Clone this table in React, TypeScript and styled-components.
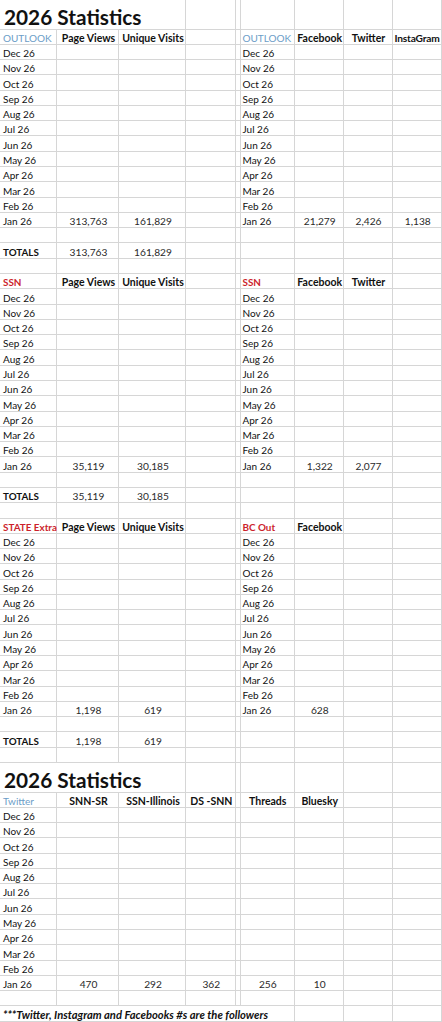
import React from "react";
import styled, { createGlobalStyle, css } from "styled-components";

const GlobalStyle = createGlobalStyle`
  html, body { margin: 0; padding: 0; background: #ffffff; overflow: hidden; }
  body { font-family: Lato, "Open Sans", sans-serif; }
`;

const ROW = "15.29px";
const TITLE = "29.5px";

const Sheet = styled.div`
  display: grid;
  width: 442px;
  grid-template-columns: 57px 62px 67px 49.5px 4px 55.5px 48.5px 49px 49.5px;
  grid-template-rows: ${TITLE} repeat(48, ${ROW}) ${TITLE} repeat(15, ${ROW});
  font-family: Lato, "Open Sans", sans-serif;
  font-size: 10px;
  color: #111111;
`;

type Tone = "plain" | "blue" | "red" | "head" | "tight" | "num" | "bold" | "title" | "note";

const toneStyles: Record<Tone, ReturnType<typeof css>> = {
  plain: css`font-weight: 400;`,
  blue: css`font-weight: 400; color: #6b9dc7; font-size: 10px;`,
  red: css`font-weight: 700; color: #cc1f2c; font-size: 9.9px;`,
  head: css`font-weight: 700; font-size: 10.5px;`,
  tight: css`font-weight: 700; font-size: 10.2px; letter-spacing: -0.2px; padding-left: 2px;`,
  num: css`font-weight: 400; color: #2a2a2a; font-size: 10.2px;`,
  bold: css`font-weight: 700; font-size: 9.8px;`,
  title: css`font-weight: 700; font-size: 20.8px; line-height: 24px; padding-left: 4px;`,
  note: css`font-weight: 700; font-style: italic; font-size: 11.2px;`,
};

const Cell = styled.div<{ $tone: Tone; $center: boolean; $span: number }>`
  box-sizing: border-box;
  grid-column: span ${(p) => p.$span};
  border-right: 1px solid #d6d6d6;
  border-bottom: 1px solid #d6d6d6;
  display: flex;
  align-items: flex-end;
  justify-content: ${(p) => (p.$center ? "center" : "flex-start")};
  padding: 0 1px 0 3px;
  line-height: 12px;
  white-space: nowrap;
  overflow: visible;
  ${(p) => toneStyles[p.$tone]}
`;

type C = { t?: string; tone?: Tone; c?: boolean; span?: number };

const months = ["Dec 26", "Nov 26", "Oct 26", "Sep 26", "Aug 26", "Jul 26", "Jun 26", "May 26", "Apr 26", "Mar 26", "Feb 26", "Jan 26"];

const blank = (n: number): C[] => Array.from({ length: n }, () => ({}));

type Block = {
  left: { label: string; tone: Tone; heads: string[]; values: string[] };
  right: { label: string; tone: Tone; heads: string[]; values: string[] };
};

const fill = (cells: C[], n: number): C[] => [...cells, ...blank(n - cells.length)];

function blockRows(b: Block): C[][] {
  const rows: C[][] = [];
  const headL = fill(
    [{ t: b.left.label, tone: b.left.tone }, ...b.left.heads.map((h) => ({ t: h, tone: "head" as Tone, c: true }))],
    4
  );
  const headR = fill(
    [
      { t: b.right.label, tone: b.right.tone },
      ...b.right.heads.map((h, i) => ({ t: h, tone: (i < 2 ? "head" : "tight") as Tone, c: i < 2 })),
    ],
    4
  );
  rows.push([...headL, {}, ...headR]);
  months.forEach((m, i) => {
    const isJan = i === months.length - 1;
    const l = fill([{ t: m }, ...(isJan ? b.left.values.map((v) => ({ t: v, tone: "num" as Tone, c: true })) : [])], 4);
    const r = fill([{ t: m }, ...(isJan ? b.right.values.map((v) => ({ t: v, tone: "num" as Tone, c: true })) : [])], 4);
    rows.push([...l, {}, ...r]);
  });
  rows.push(blank(9));
  rows.push([
    ...fill([{ t: "TOTALS", tone: "bold" }, ...b.left.values.map((v) => ({ t: v, tone: "num" as Tone, c: true }))], 4),
    ...blank(5),
  ]);
  rows.push(blank(9));
  return rows;
}

const blocks: Block[] = [
  {
    left: { label: "OUTLOOK", tone: "blue", heads: ["Page Views", "Unique Visits"], values: ["313,763", "161,829"] },
    right: { label: "OUTLOOK", tone: "blue", heads: ["Facebook", "Twitter", "InstaGram"], values: ["21,279", "2,426", "1,138"] },
  },
  {
    left: { label: "SSN", tone: "red", heads: ["Page Views", "Unique Visits"], values: ["35,119", "30,185"] },
    right: { label: "SSN", tone: "red", heads: ["Facebook", "Twitter"], values: ["1,322", "2,077"] },
  },
  {
    left: { label: "STATE Extra", tone: "red", heads: ["Page Views", "Unique Visits"], values: ["1,198", "619"] },
    right: { label: "BC Out", tone: "red", heads: ["Facebook"], values: ["628"] },
  },
];

const titleRow: C[] = [{ t: "2026 Statistics", tone: "title", span: 3 }, ...blank(6)];

function bottomRows(): C[][] {
  const rows: C[][] = [];
  const heads = ["SNN-SR", "SSN-Illinois", "DS -SNN"];
  rows.push([
    { t: "Twitter", tone: "blue" },
    ...heads.map((h) => ({ t: h, tone: "head" as Tone, c: true })),
    {},
    { t: "Threads", tone: "head", c: true },
    { t: "Bluesky", tone: "head", c: true },
    {},
    {},
  ]);
  months.forEach((m, i) => {
    if (i === months.length - 1) {
      rows.push([
        { t: m },
        { t: "470", tone: "num", c: true },
        { t: "292", tone: "num", c: true },
        { t: "362", tone: "num", c: true },
        {},
        { t: "256", tone: "num", c: true },
        { t: "10", tone: "num", c: true },
        {},
        {},
      ]);
    } else {
      rows.push([{ t: m }, ...blank(8)]);
    }
  });
  rows.push(blank(9));
  rows.push([{ t: "***Twitter, Instagram and Facebooks #s are the followers", tone: "note", span: 6 }, ...blank(3)]);
  return rows;
}

const allRows: C[][] = [
  titleRow,
  ...blocks.flatMap(blockRows),
  titleRow,
  ...bottomRows(),
];

export default function App() {
  return (
    <>
      <GlobalStyle />
      <Sheet>
        {allRows.flatMap((row, r) =>
          row.map((cell, i) => (
            <Cell key={`${r}-${i}`} $tone={cell.tone ?? "plain"} $center={!!cell.c} $span={cell.span ?? 1}>
              {cell.t ?? ""}
            </Cell>
          ))
        )}
      </Sheet>
    </>
  );
}
